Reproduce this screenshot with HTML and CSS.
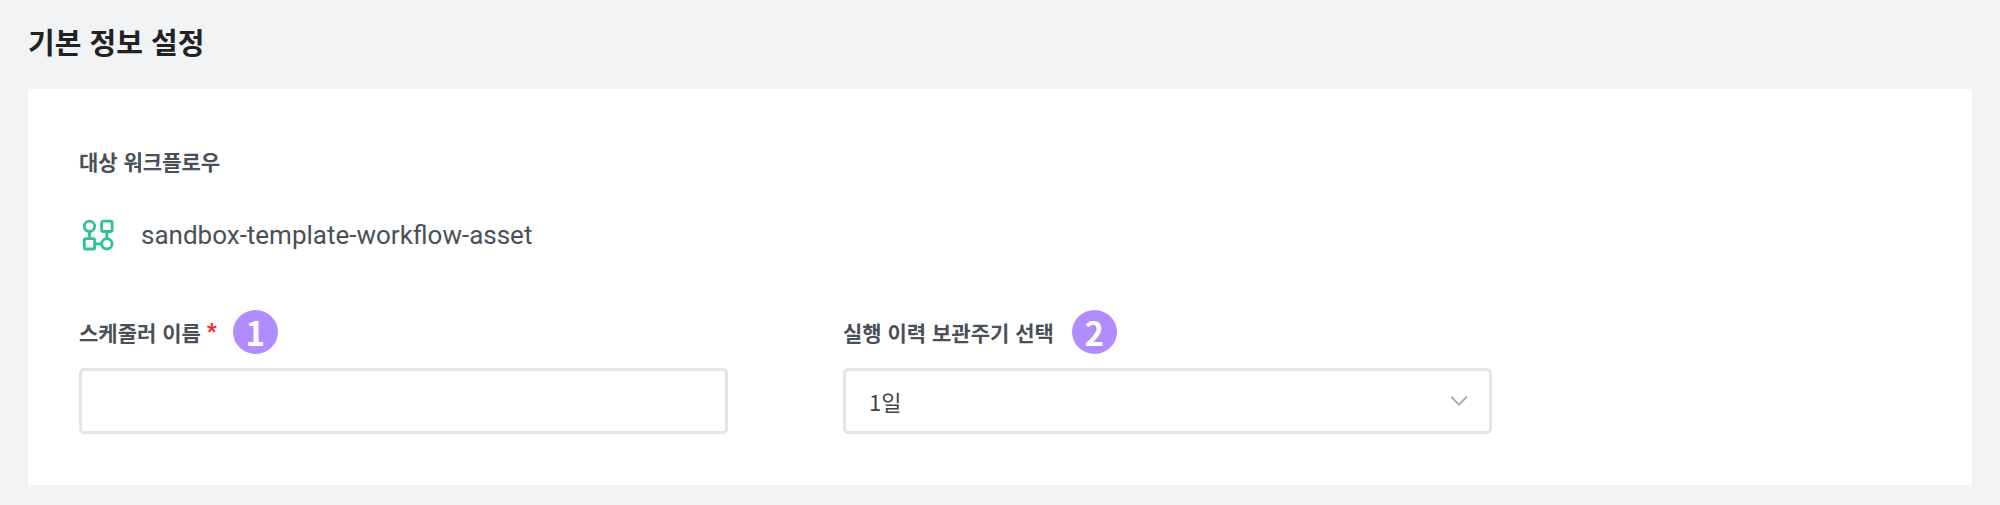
FILE: index.html
```html
<!DOCTYPE html>
<html lang="ko">
<head>
<meta charset="utf-8">
<title>기본 정보 설정</title>
<link rel="stylesheet" href="styles.css">
</head>
<body>
<main class="page">
  <h1 class="title">기본 정보 설정</h1>
  <section class="card">
    <h2 class="label">대상 워크플로우</h2>
    <div class="workflow">
      <svg class="workflow-icon" width="34" height="34" viewBox="0 0 34 34" fill="none" stroke="#2cc391" stroke-width="2.8">
        <circle cx="8.5" cy="8.3" r="5.2"/>
        <rect x="20.7" y="3.1" width="10.4" height="10.4" rx="1.8"/>
        <rect x="3.3" y="20.6" width="10.4" height="10.4" rx="1.8"/>
        <circle cx="25.9" cy="25.8" r="5.2"/>
        <path d="M8.5 13.5v7M25.9 13.5v7M13.7 25.8h7"/>
      </svg>
      <span class="workflow-name">sandbox-template-workflow-asset</span>
    </div>
    <div class="fields">
      <div class="field">
        <div class="field-head">
          <label class="label label-name" for="name">스케줄러 이름</label>
          <span class="required">*</span>
          <span class="badge">1</span>
        </div>
        <input class="control" id="name" type="text">
      </div>
      <div class="field">
        <div class="field-head">
          <span class="label label-period">실행 이력 보관주기 선택</span>
          <span class="badge">2</span>
        </div>
        <div class="control select">
          <span class="select-value">1일</span>
          <svg class="chevron" width="18" height="12" viewBox="0 0 18 12" fill="none" stroke="#adadad" stroke-width="2">
            <path d="M1.2 1.8 9 9.6l7.8-7.8"/>
          </svg>
        </div>
      </div>
    </div>
  </section>
</main>
</body>
</html>
```

FILE: styles.css
```css
* { box-sizing: border-box; }

body {
  margin: 0;
  background: #f1f3f5;
  font-family: Roboto, "Noto Sans CJK KR", sans-serif;
  color: #495057;
}

.page {
  height: 505px;
  padding: 20px 28px 0;
}

.title {
  margin: 0 0 27px;
  font: 700 29px/42px "Noto Sans CJK KR", sans-serif;
  color: #222;
}

.card {
  height: 396px;
  padding: 57px 51px 0;
  background: #fff;
}

.label {
  margin: 0;
  font: 700 21px/30px "Noto Sans CJK KR", sans-serif;
  color: #495057;
  white-space: nowrap;
}

.workflow {
  display: flex;
  align-items: center;
  gap: 26px;
  height: 34px;
  margin-top: 42px;
  padding-left: 2px;
}

.workflow-name {
  font-size: 26px;
  line-height: 34px;
}

.fields {
  display: flex;
  gap: 115px;
  margin-top: 58px;
}

.field { width: 649px; }

.field-head {
  display: flex;
  align-items: center;
  height: 44px;
  margin-bottom: 14px;
}

.required {
  width: 12px;
  margin: 0 14px 0 6px;
  font: 700 22px/30px Roboto, sans-serif;
  color: #ff2020;
}

.badge {
  width: 45px;
  height: 44px;
  border-radius: 50%;
  background: #b18cff;
  color: #fff;
  font: 700 33px/44px "Noto Sans CJK KR", sans-serif;
  text-align: center;
}

.label-period { margin-right: 18px; }

.control {
  display: block;
  width: 100%;
  height: 66px;
  border: 3px solid #e1e6ea;
  border-radius: 5px;
  background: #fff;
  outline: none;
}

.select {
  display: flex;
  align-items: center;
  justify-content: space-between;
  padding: 0 21px 0 23px;
}

.select-value {
  font: 400 22px/32px "Noto Sans CJK KR", sans-serif;
  color: #444;
}
```
